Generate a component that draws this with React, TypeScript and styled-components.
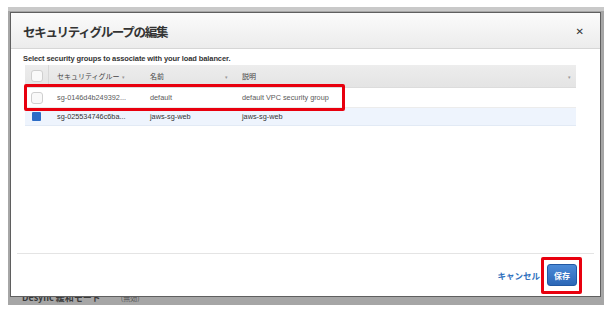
import React from 'react'
import styled, { createGlobalStyle } from 'styled-components'

const GlobalStyle = createGlobalStyle`
  html, body {
    margin: 0;
    padding: 0;
    background: #ffffff;
  }
  body {
    font-family: "Liberation Sans", "Noto Sans CJK JP", sans-serif;
  }
`

interface iGroup {
  id: string
  name: string
  description: string
  checked: boolean
}

const groups: iGroup[] = [
  { id: 'sg-0146d4b249392...', name: 'default', description: 'default VPC security group', checked: false },
  { id: 'sg-025534746c6ba...', name: 'jaws-sg-web', description: 'jaws-sg-web', checked: true },
]

const App = () => {
  return (
    <Page>
      <GlobalStyle />
      <Frame>
        <Modal>
          <Header>
            <Title>セキュリティグループの編集</Title>
            <Close>✕</Close>
          </Header>
          <Body>
            <Lead>Select security groups to associate with your load balancer.</Lead>
            <Table>
              <HeadRow>
                <CheckCell>
                  <Box />
                </CheckCell>
                <HeadCell>
                  <span>セキュリティグルー</span>
                  <Caret>▾</Caret>
                </HeadCell>
                <HeadCell spread>
                  <span>名前</span>
                  <Caret>▾</Caret>
                </HeadCell>
                <HeadCell spread>
                  <span>説明</span>
                  <Caret>▾</Caret>
                </HeadCell>
              </HeadRow>
              {groups.map((g) => (
                <Row key={g.id} selected={g.checked}>
                  <CheckCell>{g.checked ? <Filled /> : <Box />}</CheckCell>
                  <Cell selected={g.checked}>{g.id}</Cell>
                  <Cell selected={g.checked}>{g.name}</Cell>
                  <Cell selected={g.checked}>{g.description}</Cell>
                </Row>
              ))}
            </Table>
          </Body>
          <Footer>
            <Cancel>キャンセル</Cancel>
            <Save>保存</Save>
          </Footer>
        </Modal>
        <Under>
          <UnderText>
            <b>Desync 緩和モード</b>
            <span>(無効)</span>
          </UnderText>
        </Under>
      </Frame>
      <Mark style={{ left: 24, top: 84, width: 321, height: 27 }} />
      <Mark style={{ left: 541, top: 257, width: 41, height: 37 }} />
    </Page>
  )
}

export default App

const Page = styled.div`
  position: relative;
  width: 611px;
  height: 312px;
  padding: 7px 7px 7px 8px;
  box-sizing: border-box;
`

const Frame = styled.div`
  width: 596px;
  height: 298px;
  box-sizing: border-box;
  background: #a6a6a6;
  border-top: 4px solid #c9c9c9;
  padding: 1px 3px 0 2px;
  display: flex;
  flex-direction: column;
`

const Modal = styled.div`
  height: 285px;
  box-sizing: border-box;
  background: #fff;
  border: 1px solid #5f5f5f;
  display: flex;
  flex-direction: column;
`

const Header = styled.div`
  height: 36px;
  flex-shrink: 0;
  box-sizing: border-box;
  background: linear-gradient(#fbfbfb, #ececec);
  border-bottom: 1px solid #d6d6d6;
  display: flex;
  align-items: center;
  justify-content: space-between;
  padding: 2px 16px 0 12px;
`

const Title = styled.div`
  font-family: "Noto Sans CJK JP", sans-serif;
  font-weight: 700;
  font-size: 12.5px;
  letter-spacing: -1.3px;
  color: #333;
`

const Close = styled.div`
  font-family: "DejaVu Sans", sans-serif;
  font-size: 10px;
  font-weight: 700;
  color: #333;
`

const Body = styled.div`
  flex: 1;
  padding: 5px 24px 0 14px;
`

const Lead = styled.div`
  font-weight: 700;
  font-size: 7.5px;
  letter-spacing: -0.1px;
  color: #333;
  height: 11px;
  line-height: 9px;
  margin-left: -2px;
`

const Table = styled.div`
  display: flex;
  flex-direction: column;
`

const HeadRow = styled.div`
  display: grid;
  grid-template-columns: 23px 93px 92px 1fr;
  height: 22px;
  background: linear-gradient(#ededed, #e4e4e4);
  border-bottom: 1px solid #dcdcdc;
`

const Row = styled.div<{ selected: boolean }>`
  display: grid;
  grid-template-columns: 23px 93px 92px 1fr;
  height: ${(p) => (p.selected ? '17px' : '19px')};
  background: ${(p) => (p.selected ? '#eef4fd' : '#ffffff')};
  border-bottom: 1px solid ${(p) => (p.selected ? '#e2eaf5' : '#ececec')};
`

const CheckCell = styled.div`
  display: flex;
  align-items: center;
  justify-content: center;
`

const HeadCell = styled.div<{ spread?: boolean }>`
  display: flex;
  align-items: center;
  justify-content: ${(p) => (p.spread ? 'space-between' : 'flex-start')};
  padding: 0 5px 0 8px;
  font-family: "Noto Sans CJK JP", sans-serif;
  font-size: 7px;
  color: #444;
  border-left: 1px solid #d8d8d8;
  &:nth-child(3),
  &:nth-child(4) {
    border-left-color: transparent;
  }
`

const Caret = styled.span`
  font-size: 5px;
  color: #999;
  margin-left: 2px;
`

const Cell = styled.div<{ selected: boolean }>`
  display: flex;
  align-items: center;
  padding-left: 9px;
  font-size: 7.3px;
  color: ${(p) => (p.selected ? '#333' : '#5a5a5a')};
  white-space: nowrap;
  overflow: hidden;
`

const Box = styled.div`
  width: 10px;
  height: 10px;
  border: 1px solid #cfcfcf;
  border-radius: 3px;
  background: #f9f9f9;
`

const Filled = styled.div`
  width: 9px;
  height: 9px;
  border-radius: 1px;
  background: #2c6cc6;
`

const Footer = styled.div`
  height: 42px;
  flex-shrink: 0;
  margin: 0 6px;
  border-top: 1px solid #e4e4e4;
  display: flex;
  align-items: center;
  justify-content: flex-end;
  gap: 7px;
  padding: 0 17px 0 0;
`

const Cancel = styled.div`
  font-family: "Noto Sans CJK JP", sans-serif;
  font-size: 8.5px;
  font-weight: 700;
  color: #2e6fbd;
`

const Save = styled.div`
  width: 30px;
  height: 22px;
  box-sizing: border-box;
  border: 1px solid #2158a3;
  border-radius: 3px;
  background: linear-gradient(#4b8ad7, #2c67b7);
  color: #fff;
  font-family: "Noto Sans CJK JP", sans-serif;
  font-size: 8px;
  font-weight: 700;
  display: flex;
  align-items: center;
  justify-content: center;
`

const Under = styled.div`
  height: 8px;
  overflow: hidden;
  padding-left: 12px;
`

const UnderText = styled.div`
  margin-top: -5px;
  display: flex;
  gap: 20px;
  font-family: "Noto Sans CJK JP", sans-serif;
  font-size: 9px;
  line-height: 12px;
  color: #3a3a3a;
  span {
    font-size: 7px;
    color: #555;
  }
`

const Mark = styled.div`
  position: absolute;
  box-sizing: border-box;
  border: 3px solid #e8000e;
  border-radius: 2px;
`
